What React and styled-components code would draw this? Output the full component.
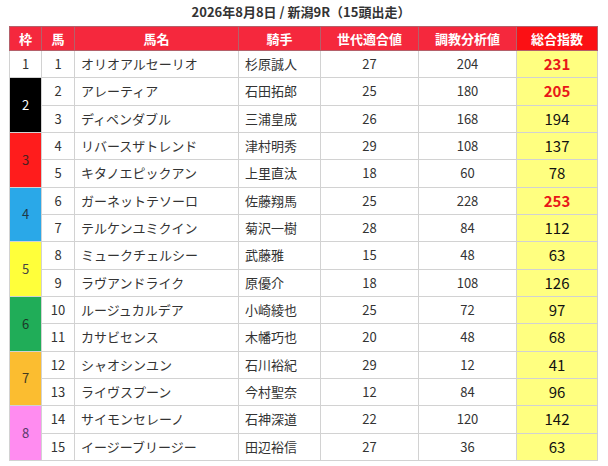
import React from "react";
import styled, { createGlobalStyle } from "styled-components";

const Global = createGlobalStyle`
  html, body { margin: 0; padding: 0; background: #fff; }
  body { font-family: "Noto Sans CJK JP", "Noto Sans", sans-serif; color: #333; }
`;

const Wrap = styled.div`
  padding: 0 11px 0 9px;
`;

const Title = styled.h2`
  margin: 0 0 2px;
  height: 24px;
  line-height: 24px;
  font-size: 13px;
  font-weight: 700;
  text-align: center;
  color: #333;
  padding-right: 4px;
`;

const Table = styled.table`
  width: 588px;
  border-collapse: collapse;
  table-layout: fixed;
  font-size: 13px;
`;

const Th = styled.th`
  background: ${(p) => (p.$total ? "#fb1014" : "#f5283d")};
  color: #fff;
  font-weight: 700;
  font-size: 13px;
  line-height: 15px;
  padding: 4px 0;
  border: 1px solid #b4606a;
  text-align: center;
`;

const Td = styled.td`
  border: 1px solid #d2d2d2;
  padding: 4px ${(p) => (p.$left ? "6px" : "0")};
  line-height: 18.33px;
  text-align: ${(p) => (p.$left ? "left" : "center")};
  color: #333;
  white-space: nowrap;
`;

const FrameTd = styled(Td)`
  background: ${(p) => p.$bg};
  color: ${(p) => p.$fg};
`;

const TotalTd = styled(Td)`
  background: #ffff80;
  font-size: 15px;
  color: ${(p) => (p.$hot ? "#e81818" : "#111")};
  font-weight: ${(p) => (p.$hot ? 700 : 400)};
`;

const frames = {
  1: { bg: "#ffffff", fg: "#333" },
  2: { bg: "#000000", fg: "#fff" },
  3: { bg: "#ff1c1c", fg: "#4a2020" },
  4: { bg: "#2aa8e8", fg: "#203848" },
  5: { bg: "#ffff3a", fg: "#444" },
  6: { bg: "#20ad58", fg: "#1c3a28" },
  7: { bg: "#fbbd30", fg: "#443a20" },
  8: { bg: "#ff8cf0", fg: "#5a3a6a" },
};

const rows = [
  [1, 1, "オリオアルセーリオ", "杉原誠人", 27, 204, 231, true],
  [2, 2, "アレーティア", "石田拓郎", 25, 180, 205, true],
  [2, 3, "ディペンダブル", "三浦皇成", 26, 168, 194, false],
  [3, 4, "リバースザトレンド", "津村明秀", 29, 108, 137, false],
  [3, 5, "キタノエピックアン", "上里直汰", 18, 60, 78, false],
  [4, 6, "ガーネットテソーロ", "佐藤翔馬", 25, 228, 253, true],
  [4, 7, "テルケンユミクイン", "菊沢一樹", 28, 84, 112, false],
  [5, 8, "ミュークチェルシー", "武藤雅", 15, 48, 63, false],
  [5, 9, "ラヴアンドライク", "原優介", 18, 108, 126, false],
  [6, 10, "ルージュカルデア", "小崎綾也", 25, 72, 97, false],
  [6, 11, "カサビセンス", "木幡巧也", 20, 48, 68, false],
  [7, 12, "シャオシンユン", "石川裕紀", 29, 12, 41, false],
  [7, 13, "ライヴスプーン", "今村聖奈", 12, 84, 96, false],
  [8, 14, "サイモンセレーノ", "石神深道", 22, 120, 142, false],
  [8, 15, "イージーブリージー", "田辺裕信", 27, 36, 63, false],
];

export default function App() {
  return (
    <Wrap>
      <Global />
      <Title>2026年8月8日 / 新潟9R（15頭出走）</Title>
      <Table>
        <colgroup>
          <col style={{ width: 32 }} />
          <col style={{ width: 33 }} />
          <col style={{ width: 164 }} />
          <col style={{ width: 82 }} />
          <col style={{ width: 98 }} />
          <col style={{ width: 98 }} />
          <col style={{ width: 81 }} />
        </colgroup>
        <thead>
          <tr>
            <Th>枠</Th>
            <Th>馬</Th>
            <Th>馬名</Th>
            <Th>騎手</Th>
            <Th>世代適合値</Th>
            <Th>調教分析値</Th>
            <Th $total>総合指数</Th>
          </tr>
        </thead>
        <tbody>
          {rows.map((r, i) => {
            const [f, n, name, jockey, a, b, t, hot] = r;
            const first = i === 0 || rows[i - 1][0] !== f;
            const span = rows.filter((x) => x[0] === f).length;
            return (
              <tr key={n}>
                {first && (
                  <FrameTd rowSpan={span} $bg={frames[f].bg} $fg={frames[f].fg}>
                    {f}
                  </FrameTd>
                )}
                <Td>{n}</Td>
                <Td $left>{name}</Td>
                <Td $left>{jockey}</Td>
                <Td>{a}</Td>
                <Td>{b}</Td>
                <TotalTd $hot={hot}>{t}</TotalTd>
              </tr>
            );
          })}
        </tbody>
      </Table>
    </Wrap>
  );
}
